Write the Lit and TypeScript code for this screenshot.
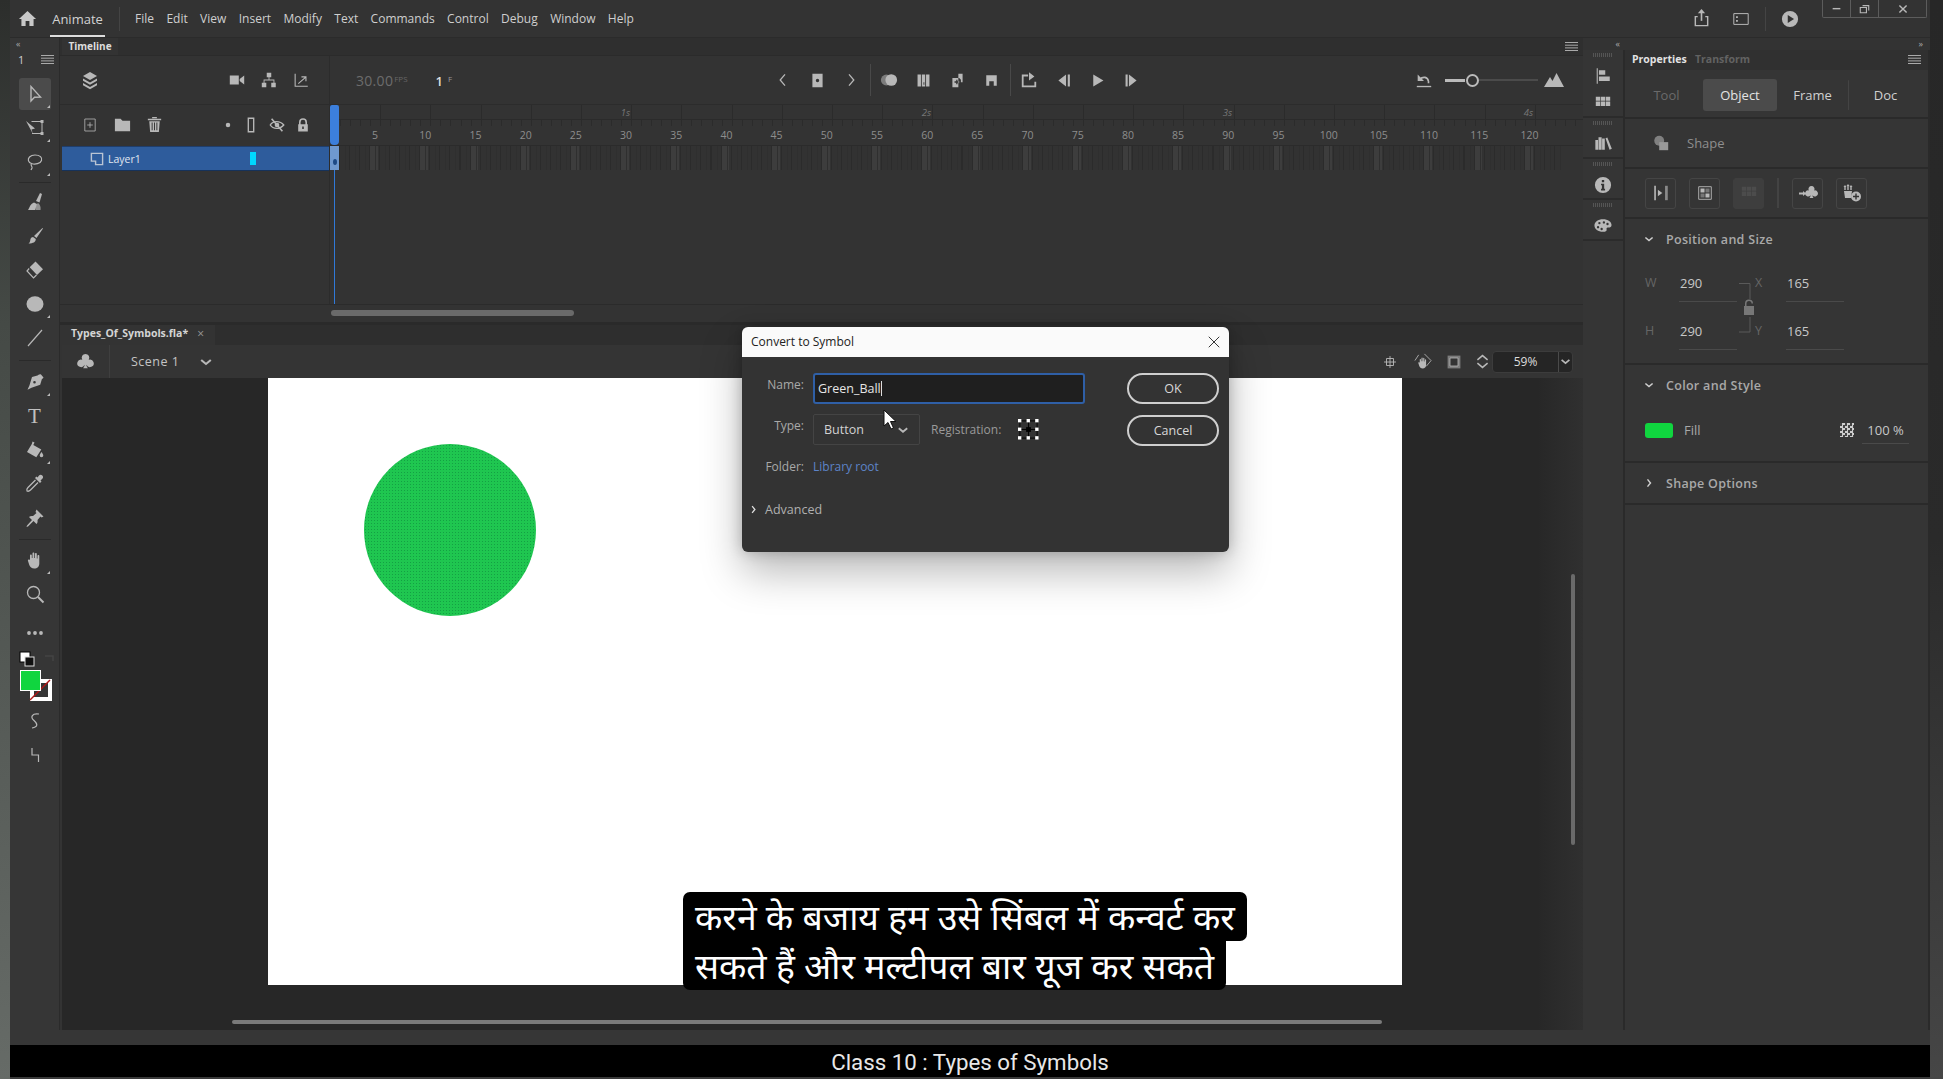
// app.ts
import { LitElement, html, css, svg, TemplateResult } from 'lit';
import { customElement } from 'lit/decorators.js';

const stroke = (d: string, w = 1.4) =>
  svg`<path d=${d} fill="none" stroke="currentColor" stroke-width=${w}></path>`;
const fill = (d: string) => svg`<path d=${d}></path>`;

const P: Record<string, TemplateResult> = {
  home: fill('M10 2 1 10.5h2.6V18H8v-5.5h4V18h4.4v-7.5H19z'),
  layers: svg`${fill('M10 2l7 4-7 4-7-4z')}${fill('M3 8.6l7 4 7-4v2.2l-7 4-7-4z')}${fill('M3 13l7 4 7-4v2.2l-7 4-7-4z')}`,
  camera: fill('M2 5h10v10H2zM13 9l5-4v10l-5-4z'),
  tree: fill('M7.5 2h5v5h-2v2.5H16V13h1.5v5h-5v-5H15v-2.5H5V13h2v5H2v-5h2V9.5h5.5V7h-2z'),
  graph: svg`${stroke('M3.5 3v14h14', 1.2)}${stroke('M7 14l8-7M10.5 6.5H15.5V11.5', 1.2)}`,
  plus: svg`${stroke('M3.5 2.5h13v15h-13z', 1)}${stroke('M10 6.5v7M6.5 10h7', 1)}`,
  folder: fill('M2 4h6l2 2h8v11H2z'),
  trash: svg`${fill('M3 4h14v1.6H3zM7.5 2h5v1.5h-5z')}${fill('M4.5 6.5h11L14.6 18H5.4zM7 8v8h1V8zm2.5 0v8h1V8zM12 8v8h1V8z')}`,
  dot: svg`<circle cx="10" cy="10" r="3.2"></circle>`,
  frame: stroke('M7 2.5h6v15H7z', 1.5),
  eye: svg`${stroke('M2.5 10c3-5 11-5 15 0-4 5-12 5-15 0z', 1.5)}<circle cx="10" cy="10" r="2.6"></circle>${stroke('M4 3l12 14', 1.8)}`,
  lock: fill('M5 9V6.5a5 5 0 0 1 10 0V9h1v9H4V9zm2 0h6V6.5a3 3 0 0 0-6 0zm2 3v3h2v-3z'),
  left: stroke('M12.5 3 6.5 10l6 7', 1.6),
  right: stroke('M7.5 3l6 7-6 7', 1.6),
  key: fill('M4 2h12v16H4zm6 6a2 2 0 1 0 0 4 2 2 0 0 0 0-4z'),
  onion: svg`<circle cx="7" cy="10" r="6" opacity=".55"></circle><circle cx="12.5" cy="10" r="6.5"></circle>`,
  bars: fill('M3 3h4v14H3zM8 3h4v14H8zm2 9v3h1v-3zM13 3h4v14h-4z'),
  copyf: fill('M4 7h7v11H4zM11 2h5v10h-2V9l-2-2h-1zM8.5 9v2h-2v1.5h2v2H10v-2h2V11h-2V9z'),
  insert: fill('M3 3h14v14h-4v-6H7v6H3z'),
  loop: svg`${stroke('M9 5H3v12h14v-5', 2)}${fill('M10 1.5l6 4.5-6 4.5z')}`,
  stepb: fill('M13 3v14L4 10zM15 3h2.5v14H15z'),
  play: fill('M5 3l12 7-12 7z'),
  stepf: fill('M7 3v14l9-7zM3 3h2.5v14H3z'),
  undo: svg`${stroke('M5 9.5c4-4 9-3 10 2v2', 1.8)}${fill('M3 4v7h7z')}${fill('M2 16.5h16V18H2z')}`,
  mount: fill('M0 17 6 7l2.5 4L12.5 3 20 17z'),
  club: fill('M10 2a4 4 0 0 1 3.4 6.1A4 4 0 1 1 11 13.5c0 1.5.5 2.5 1.5 3.5h-5c1-1 1.5-2 1.5-3.5a4 4 0 1 1-2.4-5.4A4 4 0 0 1 10 2z'),
  chev: stroke('M4 7.5l6 5 6-5', 2.6),
  chevr: stroke('M7.5 4l5 6-5 6', 2.4),
  cross: svg`${stroke('M5 5h10v10H5z', 1.3)}${stroke('M10 1.5v17M1.5 10h17', 1.3)}`,
  hand: fill('M5 9.5V5.5c0-1.3 1.8-1.3 1.8 0V8h.7V3.5c0-1.3 1.8-1.3 1.8 0V8h.7V4c0-1.3 1.8-1.3 1.8 0v4.5h.7V6c0-1.3 1.8-1.3 1.8 0v7.5c0 3-2 5-5 5-2.8 0-4-1.5-5-3.5L3 11c-.6-1.2 1-2 1.8-1z'),
  handbox: svg`<g transform="translate(3.5 4) scale(.72)">${fill('M5 9.5V5.5c0-1.3 1.8-1.3 1.8 0V8h.7V3.5c0-1.3 1.8-1.3 1.8 0V8h.7V4c0-1.3 1.8-1.3 1.8 0v4.5h.7V6c0-1.3 1.8-1.3 1.8 0v7.5c0 3-2 5-5 5-2.8 0-4-1.5-5-3.5L3 11c-.6-1.2 1-2 1.8-1z')}</g>${stroke('M12 2l7 7-5 6M2 9l4-6', .9)}`,
  crop: svg`<path d="M2 2h16v16H2z" fill="currentColor" opacity=".55"></path><path d="M5 5h10v10H5z" fill="#333" stroke="currentColor" stroke-width="1"></path>`,
  updown: stroke('M4 8l6-5 6 5M4 12l6 5 6-5', 1.8),
  share: svg`${stroke('M6 8H3.5v9.5h13V8H14', 1.5)}${stroke('M10 12.5V2.5', 1.7)}${fill('M10 0l3.8 4.5H6.2z')}`,
  panel: svg`${stroke('M2 4h16v12H2z', 1.1)}${fill('M4.5 7h2v2h-2zM4.5 11h2v2h-2z')}`,
  circplay: fill('M10 1a9 9 0 1 1 0 18 9 9 0 0 1 0-18zM7.5 5.5v9l7-4.5z'),
  minus: fill('M3 9h14v2.6H3z'),
  restore: svg`${stroke('M7 5.5h9.5v7.5M3.5 8.5h9.5v8h-9.5z', 1.7)}`,
  close: stroke('M4 4l12 12M16 4 4 16', 2.4),
  thinx: stroke('M2.5 2.5l15 15M17.5 2.5l-15 15', 1.3),
  select: svg`<path d="M6 2.5v14.5l3.5-3.7 6-.3z" fill="none" stroke="currentColor" stroke-width="1.4"></path>`,
  free: svg`${fill('M1 3l9 7.5-3.5 1L8 16z')}${stroke('M6.5 3.5H17V15.5H7', 1)}${fill('M15.5 2h3v3h-3zM15.5 14h3v3h-3z')}`,
  lasso: svg`${stroke('M10 3c5 0 7.5 2.5 6.5 5.5-1 3-6.5 4.5-10 3C3 10.5 2.5 7 4.5 5 6 3.5 8 3 10 3z', 1.2)}${stroke('M6.5 11.5c-1.5 2 1 2.5.5 4.5l-1 2', 1.2)}`,
  paint: svg`${fill('M15 1l2 1-2.5 8.5-3.5-1.5z')}<path d="M13 11c2 1.5 3 4 2.5 7h-5c-.8-2.5.2-5.5 2.5-7z" opacity=".7"></path>${fill('M9 10.5l3 1.5-2 6H3c1.5-2 2-6 6-7.5z')}`,
  brush: fill('M17.5 2l.5.5L11.5 12 9 10zM8 11l2.8 2c0 3-2.5 4.5-7.3 4.5 2-1.5 1.5-3 2-4.5.4-1.2 1.5-2 2.5-2z'),
  eraser: svg`${fill('M10.5 1.5 18 9.2 12 15 4.7 7.3z')}${stroke('M4.2 8.5 2 11l6.5 7 3-3', 1.2)}`,
  oval: svg`<ellipse cx="10" cy="10" rx="8.5" ry="7.8"></ellipse>`,
  line: stroke('M3 18 17 2', 1.2),
  pen: fill('M16 2.5l2.5 3c-.3 1-1 1.3-1.5 1.3l-1.8 6-8.7 3-4 2 2-4.5L7 5l5.5-1.5C13 2.8 15 1.5 16 2.5zM9.5 9a1.3 1.3 0 1 0 0 2.6 1.3 1.3 0 0 0 0-2.6z'),
  bucket: fill('M7.5 1.5l2 1L8.3 5l8 4.5-5 7.8L2 12 6.8 4zM16.5 12c1 1.5 1.8 2.5 1.8 3.5a1.8 1.8 0 0 1-3.6 0c0-1 .8-2 1.8-3.5z'),
  drop: svg`${fill('M14 1.5c1-1 2.3-1 3.3 0s1 2.3 0 3.3L15.5 6.5l1 1-1.5 1.5-5-5L11.5 2.5l1 1z')}${stroke('M10.5 6 3 13.5c-1 1-1.5 2.5-1 3.5 1 .5 2.5 0 3.5-1L13 8.5', 1.3)}`,
  pin: fill('M11.5 1.5l7 7-2 1-1-1-3 3.5c.3 1.5 0 3-1 4l-3-3-5.5 5.5-1.5.5.5-1.5L7 12 4 9c1-1 2.5-1.3 4-1l3.5-3-1-1z'),
  zoom: svg`<circle cx="8.5" cy="8.5" r="6" fill="none" stroke="currentColor" stroke-width="1.3"></circle>${stroke('M13 13l5.5 5.5', 2)}`,
  dots: svg`<circle cx="4" cy="10" r="1.9"></circle><circle cx="10" cy="10" r="1.9"></circle><circle cx="16" cy="10" r="1.9"></circle>`,
  smooth: stroke('M14 3C7 2 5 6 9 9.5s4 6.5-2 7.5', 1.2),
  straight: stroke('M7 3v7h6.5v7', 1.2),
  align: fill('M3 1.5h1.2v17H3zM5.5 3.5h7v5h-7zM5.5 10.5h12v5h-12z'),
  grid: fill('M2 3h4.8v4.5H2zM7.5 3h4.8v4.5H7.5zM13 3h5v4.5h-5zM2 8.2h4.8v5H2zM7.5 8.2h4.8v5H7.5zM13 8.2h5v5h-5z'),
  library: fill('M1.5 5.5h3v11h-3zM5 2.5h3.5v14H5zM9 4h3v12.5H9zM12.8 3.5l2-.7 5 12.5-2.5 1z'),
  info: fill('M10 1a9 9 0 1 1 0 18 9 9 0 0 1 0-18zM8.7 4.5v2.5h2.6V4.5zM7.8 8.5v1.7h1v4H7.8V16h4.5v-1.8h-1V8.5z'),
  palette: fill('M10 2.5c5.5 0 9.5 3 9.5 6.5 0 2-1.5 2.8-3.5 2.8-1.5 0-2.5.7-2 2 .5 1.2-.5 2.7-4 2.7C4.5 16.5.5 13.5.5 9.5S4.5 2.5 10 2.5zM6 5.5a1.3 1.3 0 1 0 0 2.6 1.3 1.3 0 0 0 0-2.6zm5-.8a1.3 1.3 0 1 0 0 2.6 1.3 1.3 0 0 0 0-2.6zM15 6.5a1.3 1.3 0 1 0 0 2.6 1.3 1.3 0 0 0 0-2.6zM4.5 10a1.3 1.3 0 1 0 0 2.6 1.3 1.3 0 0 0 0-2.6zM8.5 12a1.3 1.3 0 1 0 0 2.6 1.3 1.3 0 0 0 0-2.6z'),
  shape: svg`<circle cx="8" cy="7.5" r="5.5" opacity=".75"></circle><path d="M8 9h10v9H8z"></path>`,
  distrib: svg`${fill('M2.5 2h1.8v16H2.5z')}${fill('M6.5 6.5l5 3.5-5 3.5z')}<path d="M14.5 2h3v16h-3z" opacity=".65"></path>`,
  grp: svg`<path d="M3 3h14v14H3z" fill="none" stroke="currentColor" stroke-width="1"></path>${fill('M5 5h4.5v4.5H5zM10.5 10.5H15V15h-4.5z')}<path d="M10.5 5H15v4.5h-4.5zM5 10.5h4.5V15H5z" opacity=".5"></path>`,
  toSym: svg`${fill('M1 9.5h4V8l3 2.5L5 13v-1.5H1z')}${fill('M13.5 3a3 3 0 0 1 2.6 4.5 3 3 0 1 1-1.6 4.7c0 1 .3 1.8 1 2.8h-4c.7-1 1-1.8 1-2.8a3 3 0 1 1-1.6-4.7A3 3 0 0 1 13.5 3z')}`,
  symAdd: svg`${fill('M3 2l1.5 2H3.7v3H2.3V4H1.5zM9 2l1.5 2h-.8v3H8.3V4h-.8zM6 1l1.5 2h-.8v4H5.3V3h-.8zM2 8h8l-1 7H3z')}<circle cx="14" cy="13.5" r="5"></circle><path d="M13.3 10.5h1.4v2.3H17v1.4h-2.3v2.3h-1.4v-2.3H11v-1.4h2.3z" fill="#333"></path>`,
  page: svg`<path fill-rule="evenodd" d="M1 1h18v18H7v-5H1zM3 3v9h6v5h8V3z"></path>`,
};

const ic = (name: string, size = 20) =>
  html`<svg class="ic" width=${size} height=${size} viewBox="0 0 20 20">${P[name]}</svg>`;

const hamburger = html`<svg class="burger" width="13" height="9" viewBox="0 0 13 9"><path d="M0 .5h13M0 3.200h13M0 5.900h13M0 8.500h13" stroke="currentColor" fill="none" stroke-width="1"></path></svg>`;

const MENU = ['File', 'Edit', 'View', 'Insert', 'Modify', 'Text', 'Commands', 'Control', 'Debug', 'Window', 'Help'];
const FRAMES = Array.from({ length: 24 }, (_, i) => (i + 1) * 5);
const SECONDS = ['1s', '2s', '3s', '4s'];

@customElement('app-root')
export class AppRoot extends LitElement {
  static styles = css`
    :host {
      display: grid;
      grid-template-columns: 10px 1920px 13px;
      width: 1943px;
      height: 1079px;
      overflow: hidden;
      position: relative;
      font-family: 'Open Sans', 'Noto Sans', sans-serif;
      font-size: 12px;
      color: #cfcfcf;
      background: #333;
    }
    .ic { display: block; fill: currentColor; color: #b8b8b8; flex: none; }
    .burger { display: block; color: #aaa; flex: none; }
    .edge-l { background: linear-gradient(#2c2e2c, #454a46 30%, #666b67); }
    .edge-r { background: linear-gradient(#272727, #2a2a2a 50%, #464646); }
    .app { display: flex; flex-direction: column; height: 1079px; background: #363636; }

    /* menu bar */
    .menubar {
      height: 37px; flex: none; display: flex; align-items: center;
      background: #333; border-bottom: 1px solid #2b2b2b; position: relative;
    }
    .home { width: 18px; margin-left: 8px; }
    .home .ic { color: #c8c8c8; }
    .brand {
      margin-left: 14px; width: 55px; height: 37px; box-sizing: border-box; line-height: 38px;
      border-bottom: 2px solid #ddd; text-align: center; font-size: 13px; color: #d2d2d2;
    }
    .msep { width: 1px; height: 24px; background: #444; margin: 0 15px 0 14px; }
    .menu { display: flex; gap: 12.4px; margin-top: -1px; }
    .topright { margin-left: auto; display: flex; align-items: center; height: 37px; }
    .topright .slot { width: 40px; display: flex; justify-content: center; }
    .tsep { width: 1px; height: 24px; background: #444; margin: 0 4px; }
    .winbtns {
      display: flex; height: 17px; align-self: flex-start; margin: 0 3px 0 12px;
      border: 1px solid #5c5c5c; border-top: 0; border-radius: 0 0 2px 2px;
    }
    .winbtns div { display: flex; align-items: center; justify-content: center; border-left: 1px solid #5c5c5c; }
    .winbtns div:first-child { border-left: 0; width: 27px; }
    .winbtns div:nth-child(2) { width: 27px; }
    .winbtns div:nth-child(3) { width: 47px; }

    .work { flex: none; height: 992px; display: flex; background: #2a2a2a; }

    /* tools */
    .tools { width: 50px; flex: none; background: #363636; display: flex; flex-direction: column; align-items: center; border-right: 1px solid #2b2b2b; box-sizing: border-box; }
    .collapse { height: 12px; align-self: stretch; padding-left: 6px; font-size: 9px; line-height: 12px; color: #aaa; letter-spacing: -1px; }
    .toolhead { align-self: stretch; height: 18px; display: flex; align-items: center; justify-content: space-between; padding: 0 5px 0 8px; font-size: 11px; margin-bottom: 9px; }
    .tool { width: 32px; height: 34px; display: flex; align-items: center; justify-content: center; position: relative; flex: none; }
    .tool.active::before { content: ''; position: absolute; inset: 1px 0; background: #4b4b4b; border-radius: 3px; }
    .tool .ic { position: relative; }
    .tool.corner::after {
      content: ''; position: absolute; right: 1px; bottom: 3px; border-left: 3px solid transparent; border-bottom: 3px solid #bbb;
    }
    .tool-t { font-family: 'Liberation Serif', serif; font-size: 21px; color: #c0c0c0; line-height: 1; }
    .tdiv { height: 1px; width: 32px; background: #2a2a2a; flex: none; }
    .d6 { margin: 3px 0 2px; } .d10 { margin: 5px 0 4px; } .d8 { margin: 4px 0 3px; }
    .gap5 { height: 5px; flex: none; }
    .colors { display: block; flex: none; width: 50px; height: 54px; }

    /* centre */
    .centre { width: 1523px; flex: none; display: flex; flex-direction: column; box-sizing: border-box; }
    .timeline { height: 284px; flex: none; background: #333; display: flex; flex-direction: column; }
    .tabbar { height: 18px; flex: none; display: flex; align-items: stretch; background: #2f2f2f; border-bottom: 1px solid #2b2b2b; padding-left: 2px; box-sizing: border-box; }
    .tab { width: 56px; background: #333; text-align: center; line-height: 17px; font-size: 10px; font-weight: 700; color: #ddd; }
    .tabbar .burger { margin: 4px 5px 0 auto; }
    .ctrl { height: 49px; flex: none; display: flex; align-items: center; border-bottom: 1px solid #2c2c2c; box-sizing: border-box; }
    .ctrl-left { width: 270px; flex: none; display: flex; align-items: center; padding: 0 12px 0 20px; box-sizing: border-box; height: 100%; border-right: 1px solid #2c2c2c; }
    .s32 { width: 32px; display: flex; justify-content: center; }
    .s34 { width: 34px; display: flex; justify-content: center; flex: none; }
    .push { margin-left: auto; }
    .fpsbox { width: 436px; flex: none; padding-left: 26px; box-sizing: border-box; display: flex; align-items: baseline; }
    .fps { font-size: 14px; color: #6c6c6c; letter-spacing: .3px; }
    .sup { font-size: 8px; color: #666; position: relative; top: -4px; margin-left: 1px; }
    .sup.f { color: #999; margin-left: 5px; }
    .frm { font-size: 13px; color: #ddd; font-weight: 600; margin-left: 28px; }
    .transport { display: flex; align-items: center; flex: none; }
    .tvsep { width: 4px; height: 32px; flex: none; position: relative; }
    .tvsep::after { content: ''; position: absolute; left: 1.5px; top: 0; bottom: 0; width: 1px; background: #494949; }
    .zoomctl { margin-left: auto; margin-right: 19px; display: flex; align-items: center; }
    .zminus { width: 20px; height: 3px; background: #bbb; margin: 0 1px 0 12px; }
    .zknob { width: 9px; height: 9px; border: 2px solid #bbb; border-radius: 50%; }
    .zline { width: 59px; height: 2px; background: #4b4b4b; margin-right: 6px; }

    .tlbody { height: 199px; flex: none; display: grid; grid-template-columns: 270px 1fr; }
    .lcol { display: flex; flex-direction: column; border-right: 1px solid #2c2c2c; box-sizing: border-box; padding-left: 2px; }
    .lhead { height: 41px; flex: none; display: flex; align-items: center; padding: 0 13px 2px 12px; box-sizing: border-box; }
    .lhead .s { width: 32px; display: flex; justify-content: center; }
    .lhead .n { width: 26px; display: flex; justify-content: center; }
    .lhead .n.push { margin-right: -3px; }
    .layer {
      height: 25px; flex: none; background: #2e5c9c; border-bottom: 1px solid #16325a; border-top: 1px solid #1f3e6c; box-sizing: border-box;
      display: flex; align-items: center; font-size: 10.5px; color: #e0e6f0; padding-left: 28px;
    }
    .layer .ic { color: #b9c4d4; margin-right: 4px; }
    .layer .mark { width: 6px; height: 13px; background: #00d7ff; margin-left: 109.5px; }
    .rcol { position: relative; min-width: 0; }
    .secs { height: 15px; display: flex; padding-left: 145px; box-sizing: border-box; font-size: 9.5px; font-style: italic; color: #777; line-height: 15px;
      background: repeating-linear-gradient(90deg, #2b2b2b 0 1px, transparent 1px 50.2px); border-bottom: 1px solid #2b2b2b; }
    .secs span { width: 301px; flex: none; text-align: center; }
    .nums { height: 26px; display: flex; padding: 0 0 0 20px; box-sizing: border-box; font-size: 10.5px; line-height: 30px; color: #8d8d8d; border-bottom: 1px solid #2b2b2b;
      background: repeating-linear-gradient(90deg, #2b2b2b 0 1px, transparent 1px 10.04px) 0 0 / 100% 6px no-repeat; }
    .nums span { width: 50.2px; flex: none; text-align: center; }
    .cells {
      height: 24px; margin-right: 22px;
      background:
        repeating-linear-gradient(90deg, transparent 0 5px, #2f2f2f 5px 6px, transparent 6px 9px, #2b2b2b 9px 10.04px),
        repeating-linear-gradient(90deg, transparent 0 40px, #3d3d3d 40px 48px, transparent 48px 50.2px),
        #323232;
    }
    .phead { position: absolute; left: 0; top: 0; width: 9px; height: 40px; background: #3c7fdc; border-radius: 2px 2px 4px 4px; }
    .pcell { position: absolute; left: 0; top: 41px; width: 9px; height: 24px; background: #6f99cf; }
    .pcell::after { content: ''; position: absolute; left: 2.5px; top: 13px; width: 4px; height: 6px; border-radius: 50%; background: #1d4a86; }
    .pline { position: absolute; left: 4px; top: 65px; width: 1px; height: 134px; background: #3079d8; }
    .tlscroll { height: 17px; flex: none; border-top: 1px solid #2b2b2b; box-sizing: border-box; padding: 5px 0 0 271px; }
    .thumb { width: 243px; height: 6px; border-radius: 3px; background: #6a6a6a; }

    .doc { flex: 1; display: flex; flex-direction: column; min-height: 0; border-top: 3px solid #2a2a2a; padding-left: 2px; background: #333; box-sizing: border-box; }
    .doctabs { height: 20px; flex: none; background: #2e2e2e; display: flex; }
    .doctab { width: 153px; background: #333; display: flex; align-items: center; padding: 0 0 4px 9px; box-sizing: border-box; font-size: 10.5px; font-weight: 700; color: #d4d4d4; gap: 9px; }
    .doctab i { font-style: normal; font-weight: 400; font-size: 12px; color: #999; }
    .scene { height: 33px; flex: none; display: flex; align-items: center; background: #343434; }
    .scene .clubwrap { width: 48px; display: flex; justify-content: center; position: relative; height: 100%; align-items: center; border-right: 1px solid #3f3f3f; box-sizing: border-box; }
    .scene .name { margin-left: 21px; font-size: 12.5px; color: #c4c4c4; letter-spacing: .5px; width: 67px; }
    .sright { margin-left: auto; display: flex; align-items: center; margin-right: 10px; }
    .sright .s { width: 32px; display: flex; justify-content: center; }
    .sright .s.tight { margin-right: -4px; }
    .zoombox { display: flex; height: 22px; margin-left: -6px; background: #252525; border: 1px solid #3c3c3c; border-radius: 4px; width: 81px; box-sizing: border-box; }
    .zoombox span { width: 65px; text-align: center; line-height: 20px; font-size: 12px; color: #ddd; border-right: 1px solid #4a4a4a; }
    .zoombox div { flex: 1; display: flex; align-items: center; justify-content: center; }
    .board { flex: 1; position: relative; background: linear-gradient(90deg, #272727 0 97%, #303030); padding-left: 206px; min-height: 0; }
    .stage { width: 1134px; height: 607px; background: #fff; overflow: hidden; }
    .ball {
      width: 172px; height: 172px; margin: 66px 0 0 96px; border-radius: 50%;
      background: #1fc650 radial-gradient(#14a044 .75px, transparent .9px) 0 0 / 3px 3px;
    }
    .hscroll { position: absolute; left: 170px; top: 642px; width: 1150px; height: 4px; border-radius: 2px; background: #7a7a7a; }
    .vscroll { position: absolute; right: 8px; top: 196px; width: 4px; height: 271px; border-radius: 2px; background: #6a6a6a; }

    /* right dock */
    .rdock { flex: 1; display: flex; flex-direction: column; min-width: 0; background: #2a2a2a; }
    .rtop { height: 12px; flex: none; background: #333; display: flex; justify-content: space-between; font-size: 9px; line-height: 12px; color: #aaa; letter-spacing: -1px; padding: 0 8px 0 24px; }
    .rtop .in { margin: 0 0 0 auto; width: 303px; }
    .rcols { flex: 1; display: flex; gap: 2px; min-height: 0; padding-right: 2px; }
    .icons { width: 40px; flex: none; background: #353535; display: flex; flex-direction: column; }
    .igroup { border-bottom: 2px solid #2b2b2b; display: flex; flex-direction: column; align-items: center; padding-top: 3px; }
    .hatch { width: 20px; height: 4px; background: repeating-linear-gradient(90deg, #555 0 1px, transparent 1px 2px); margin-bottom: 5px; }
    .igroup .ii { height: 27px; display: flex; align-items: center; }
    .props { flex: 1; display: flex; flex-direction: column; gap: 2px; min-width: 0; }
    .psec { background: #353535; flex: none; box-sizing: border-box; }
    .ptabs { height: 20px; display: flex; align-items: center; padding: 0 0 2px 7px; box-sizing: border-box; background: #303030; }
    .ptabs b { font-size: 10.5px; color: #e2e2e2; width: 63px; }
    .ptabs span { font-size: 10.5px; font-weight: 700; color: #626262; }
    .ptabs .burger { margin: 0 7px 0 auto; }
    .kinds { height: 47px; display: flex; align-items: center; font-size: 13px; color: #d0d0d0; padding-top: 2px; box-sizing: border-box; position: relative; }
    .kinds span { text-align: center; height: 32px; line-height: 32px; border-radius: 3px; }
    .kinds .a { width: 78px; color: #6a6a6a; padding-left: 5px; box-sizing: border-box; }
    .kinds .b { width: 74px; background: #4b4b4b; color: #e4e4e4; }
    .kinds .c { width: 71px; }
    .kinds .sep { width: 1px; height: 30px; background: #444; }
    .kinds .d { width: 73px; }
    .shape { height: 48px; display: flex; align-items: center; padding-left: 27px; gap: 17px; color: #8e8e8e; font-size: 13px; }
    .shape .ic { color: #999; }
    .btns { height: 48px; display: flex; align-items: center; padding-left: 20px; gap: 13px; }
    .btn { width: 31px; height: 31px; border: 1px solid #454545; border-radius: 3px; box-sizing: border-box; display: flex; align-items: center; justify-content: center; }
    .btn.off { background: #3e3e3e; border-color: #3e3e3e; }
    .btn.off .ic { color: #4c4c4c; }
    .bsep { width: 2px; height: 30px; background: #434343; margin-right: 0; }
    .sech { display: flex; align-items: center; height: 40px; padding-left: 18px; gap: 11px; font-size: 12.5px; font-weight: 600; color: #a9a9a9; letter-spacing: .3px; }
    .sech .ic { color: #d0d0d0; }
    .pos { height: 144px; }
    .fgrid { display: grid; grid-template-columns: 34px 58px 18px 31px 58px; grid-template-rows: 48px 48px; padding-left: 20px; font-size: 13px; color: #c8c8c8; position: relative; margin-top: 9px; }
    .fgrid .l { color: #666; font-size: 12.5px; padding-top: 6px; }
    .fgrid .v { border-bottom: 1px solid #4a4a4a; height: 27px; padding-top: 6px; box-sizing: content-box; padding-left: 1px; }
    .lockbox { position: absolute; left: 114px; top: 15px; width: 16px; height: 50px; }
    .lockbox svg { display: block; }
    .colorsec { height: 96px; }
    .fillrow { display: flex; align-items: center; padding: 16px 0 0 20px; font-size: 13px; color: #a8a8a8; }
    .swatch { width: 28px; height: 15px; border-radius: 3px; background: #10d53f; margin-right: 11px; }
    .checker { margin-left: auto; width: 14px; height: 14px; background: repeating-conic-gradient(#ccc 0 25%, #444 0 50%) 0 0 / 5px 5px; }
    .pct { color: #c8c8c8; width: 47px; margin: 0 19px 0 8px; text-align: center; border-bottom: 1px solid #4a4a4a; padding-bottom: 4px; margin-bottom: -5px; }
    .optsec { height: 40px; }
    .prest { flex: 1; background: #353535; }

    .gapbar { height: 15px; flex: none; background: #363636; }
    .caption-bar { height: 32px; flex: none; background: #000; text-align: center; font: 22.3px/34px Roboto, sans-serif; color: #e8e8e8; }
    .rest { height: 2px; flex: none; background: #3a3a3a; }

    /* convert dialog */
    .dialog {
      position: absolute; left: 742px; top: 327px; width: 487px; height: 225px; border-radius: 6px; overflow: hidden;
      display: flex; flex-direction: column; background: #333;
      box-shadow: 0 20px 42px rgba(0, 0, 0, .28), 0 0 14px rgba(0, 0, 0, .22);
    }
    .dtitle { height: 30px; flex: none; background: #fafafa; color: #222; font-size: 12px; display: flex; align-items: center; justify-content: space-between; padding: 0 8px 1px 9px; box-sizing: border-box; }
    .dtitle .ic { color: #222; }
    .dbody { flex: 1; display: flex; padding: 16px 10px 0 0; }
    .dleft { flex: 1; display: flex; flex-direction: column; min-width: 0; }
    .drow { display: flex; align-items: center; height: 31px; margin-bottom: 10px; }
    .drow.folder { height: 22px; margin-top: 0; }
    .lab { width: 62px; margin-right: 9px; text-align: right; color: #a9a9a9; font-size: 12px; flex: none; }
    .lab.up { margin-top: -9px; }
    .input { width: 272px; height: 31px; box-sizing: border-box; border: 2px solid #2f5fa6; border-radius: 3px; background: #1f1f1f; color: #e6e6e6; font-size: 12.5px; line-height: 27px; padding-left: 3px; }
    .caret { display: inline-block; width: 1px; height: 15px; background: #ddd; vertical-align: -3px; }
    .combo { width: 107px; height: 31px; box-sizing: border-box; border: 1px solid #444; border-radius: 2px; display: flex; align-items: center; justify-content: space-between; padding: 0 9px 0 10px; color: #d2d2d2; font-size: 12.5px; }
    .reg-l { margin: 0 17px 0 11px; color: #9a9a9a; font-size: 12px; }
    .lib { color: #5d84c8; font-size: 12px; }
    .adv { display: flex; align-items: center; color: #b0b0b0; font-size: 12.5px; margin-top: 14px; padding-left: 6px; gap: 6px; }
    .adv .ic { color: #ddd; }
    .dright { width: 92px; display: flex; flex-direction: column; gap: 11px; flex: none; }
    .pill { height: 31px; box-sizing: border-box; border: 2px solid #cfcfcf; border-radius: 16px; text-align: center; line-height: 27px; font-size: 12.5px; color: #d8d8d8; }
    .cursor { position: absolute; left: 882px; top: 409px; }

    /* subtitle */
    .subs {
      position: absolute; left: 683px; top: 892px; display: flex; flex-direction: column; align-items: flex-start;
      font-family: 'Noto Sans Devanagari', 'Noto Sans', 'Lohit Devanagari', 'FreeSans', sans-serif; font-size: 35.6px; color: #fff;
    }
    .subs span { background: #000; height: 49px; line-height: 60px; padding: 0 12px; border-radius: 7px; white-space: nowrap; }
    .subs span:first-child { border-bottom-left-radius: 0; }
    .subs span:last-child { border-top-left-radius: 0; border-top-right-radius: 0; }
  `;

  tool(name: string, opts = '') {
    return html`<div class="tool ${opts}">${ic(name, 20)}</div>`;
  }

  get menubar() {
    return html`<div class="menubar">
      <div class="home">${ic('home', 19)}</div>
      <div class="brand">Animate</div>
      <div class="msep"></div>
      <div class="menu">${MENU.map(m => html`<span>${m}</span>`)}</div>
      <div class="topright">
        <div class="slot">${ic('share', 19)}</div>
        <div class="slot">${ic('panel', 18)}</div>
        <div class="tsep"></div>
        <div class="slot">${ic('circplay', 18)}</div>
        <div class="winbtns">
          <div>${ic('minus', 11)}</div>
          <div>${ic('restore', 13)}</div>
          <div>${ic('close', 12)}</div>
        </div>
      </div>
    </div>`;
  }

  get tools() {
    return html`<div class="tools">
      <div class="collapse">‹‹</div>
      <div class="toolhead"><span>1</span>${hamburger}</div>
      ${this.tool('select', 'active corner')}
      ${this.tool('free', 'corner')}
      ${this.tool('lasso', 'corner')}
      <div class="tdiv d6"></div>
      ${this.tool('paint')}
      ${this.tool('brush')}
      ${this.tool('eraser')}
      ${this.tool('oval', 'corner')}
      ${this.tool('line')}
      <div class="tdiv d10"></div>
      ${this.tool('pen', 'corner')}
      <div class="tool"><span class="tool-t">T</span></div>
      ${this.tool('bucket', 'corner')}
      ${this.tool('drop')}
      ${this.tool('pin')}
      <div class="tdiv d8"></div>
      ${this.tool('hand', 'corner')}
      ${this.tool('zoom')}
      <div class="gap5"></div>
      ${this.tool('dots')}
      <svg class="colors" viewBox="0 0 50 54">
        <rect x="10" y="2" width="10" height="10" fill="#fff" stroke="#000" stroke-width="1"></rect>
        <rect x="15" y="7" width="9" height="9" fill="#111" stroke="#ddd" stroke-width="1"></rect>
        <path d="M35 6h8v5" fill="none" stroke="#444" stroke-width="1.5"></path>
        <rect x="22" y="31" width="18" height="18" fill="none" stroke="#fff" stroke-width="4"></rect>
        <path d="M20 50 40 30" stroke="#b01616" stroke-width="1.5"></path>
        <rect x="10.5" y="20.5" width="20" height="20" fill="#10d53f" stroke="#fff" stroke-width="1"></rect>
      </svg>
      ${this.tool('smooth')}
      ${this.tool('straight')}
    </div>`;
  }

  get timeline() {
    return html`<div class="timeline">
      <div class="tabbar"><div class="tab">Timeline</div>${hamburger}</div>
      <div class="ctrl">
        <div class="ctrl-left">
          ${ic('layers', 20)}
          <div class="s32 push">${ic('camera', 18)}</div>
          <div class="s32">${ic('tree', 18)}</div>
          <div class="s32">${ic('graph', 18)}</div>
        </div>
        <div class="fpsbox">
          <span class="fps">30.00</span><span class="sup">FPS</span>
          <span class="frm">1</span><span class="sup f">F</span>
        </div>
        <div class="transport">
          <div class="s34">${ic('left', 16)}</div>
          <div class="s34">${ic('key', 17)}</div>
          <div class="s34">${ic('right', 16)}</div>
          <div class="tvsep"></div>
          <div class="s34">${ic('onion', 18)}</div>
          <div class="s34">${ic('bars', 17)}</div>
          <div class="s34">${ic('copyf', 17)}</div>
          <div class="s34">${ic('insert', 15)}</div>
          <div class="tvsep"></div>
          <div class="s34">${ic('loop', 18)}</div>
          <div class="s34">${ic('stepb', 17)}</div>
          <div class="s34">${ic('play', 17)}</div>
          <div class="s34">${ic('stepf', 17)}</div>
        </div>
        <div class="zoomctl">
          ${ic('undo', 18)}
          <div class="zminus"></div><div class="zknob"></div><div class="zline"></div>
          ${ic('mount', 20)}
        </div>
      </div>
      <div class="tlbody">
        <div class="lcol">
          <div class="lhead">
            <div class="s">${ic('plus', 16)}</div>
            <div class="s">${ic('folder', 19)}</div>
            <div class="s">${ic('trash', 19)}</div>
            <div class="n push">${ic('dot', 14)}</div>
            <div class="n">${ic('frame', 18)}</div>
            <div class="n">${ic('eye', 18)}</div>
            <div class="n">${ic('lock', 16)}</div>
          </div>
          <div class="layer">
            ${ic('page', 14)}
            <span>Layer1</span><span class="mark"></span>
          </div>
        </div>
        <div class="rcol">
          <div class="secs">${SECONDS.map(s => html`<span>${s}</span>`)}</div>
          <div class="nums">${FRAMES.map(n => html`<span>${n}</span>`)}</div>
          <div class="cells"></div>
          <div class="phead"></div><div class="pcell"></div><div class="pline"></div>
        </div>
      </div>
      <div class="tlscroll"><div class="thumb"></div></div>
    </div>`;
  }

  get docArea() {
    return html`<div class="doc">
      <div class="doctabs"><div class="doctab">Types_Of_Symbols.fla* <i>×</i></div></div>
      <div class="scene">
        <div class="clubwrap">${ic('club', 19)}</div>
        <span class="name">Scene 1</span>
        ${ic('chev', 16)}
        <div class="sright">
          <div class="s">${ic('cross', 14)}</div>
          <div class="s">${ic('handbox', 19)}</div>
          <div class="s tight">${ic('crop', 16)}</div>
          <div class="s">${ic('updown', 17)}</div>
          <div class="zoombox"><span>59%</span><div>${ic('chev', 13)}</div></div>
        </div>
      </div>
      <div class="board">
        <div class="stage"><div class="ball"></div></div>
        <div class="hscroll"></div>
        <div class="vscroll"></div>
      </div>
    </div>`;
  }

  get dock() {
    const group = (names: string[]) => html`<div class="igroup"><div class="hatch"></div>
      ${names.map(n => html`<div class="ii">${ic(n, 18)}</div>`)}</div>`;
    return html`<div class="rdock">
      <div class="rtop"><span class="in">‹‹</span><span>››</span></div>
      <div class="rcols">
        <div class="icons">
          ${group(['align', 'grid'])}
          ${group(['library'])}
          ${group(['info'])}
          ${group(['palette'])}
        </div>
        <div class="props">
          <div class="psec">
            <div class="ptabs"><b>Properties</b><span>Transform</span>${hamburger}</div>
            <div class="kinds">
              <span class="a">Tool</span><span class="b">Object</span><span class="c">Frame</span>
              <span class="sep"></span><span class="d">Doc</span>
            </div>
          </div>
          <div class="psec shape">${ic('shape', 18)}<span>Shape</span></div>
          <div class="psec btns">
            <div class="btn">${ic('distrib', 18)}</div>
            <div class="btn">${ic('grp', 18)}</div>
            <div class="btn off">${ic('grid', 18)}</div>
            <div class="bsep"></div>
            <div class="btn">${ic('toSym', 20)}</div>
            <div class="btn">${ic('symAdd', 20)}</div>
          </div>
          <div class="psec pos">
            <div class="sech">${ic('chev', 12)}<span>Position and Size</span></div>
            <div class="fgrid">
              <span class="l">W</span><span class="v">290</span><span></span><span class="l">X</span><span class="v">165</span>
              <span class="l">H</span><span class="v">290</span><span></span><span class="l">Y</span><span class="v">165</span>
              <div class="lockbox">
                <svg width="16" height="50" viewBox="0 0 16 50">
                  <path d="M0 .5h11V16M11 34v15H0" fill="none" stroke="#5a5a5a" stroke-width="1"></path>
                  <path d="M6 23v-2.5a4 4 0 0 1 8 0h-1.5a2.5 2.5 0 0 0-5 0V23H15v9H5v-9z" fill="#777"></path>
                </svg>
              </div>
            </div>
          </div>
          <div class="psec colorsec">
            <div class="sech">${ic('chev', 12)}<span>Color and Style</span></div>
            <div class="fillrow">
              <div class="swatch"></div><span>Fill</span>
              <div class="checker"></div><span class="pct">100 %</span>
            </div>
          </div>
          <div class="psec optsec">
            <div class="sech">${ic('chevr', 12)}<span>Shape Options</span></div>
          </div>
          <div class="prest"></div>
        </div>
      </div>
    </div>`;
  }

  get dialog() {
    return html`<div class="dialog">
      <div class="dtitle"><span>Convert to Symbol</span>${ic('thinx', 14)}</div>
      <div class="dbody">
        <div class="dleft">
          <div class="drow">
            <span class="lab up">Name:</span>
            <div class="input">Green_Ball<span class="caret"></span></div>
          </div>
          <div class="drow">
            <span class="lab up">Type:</span>
            <div class="combo"><span>Button</span>${ic('chev', 14)}</div>
            <span class="reg-l">Registration:</span>
            <svg width="21" height="21" viewBox="0 0 22 22">
              <path d="M2 2h18v18H2zM2 11h18M11 2v18" fill="none" stroke="#000" stroke-width="1"></path>
              <g fill="#fff">
                <rect x="0" y="0" width="3.5" height="3.5"></rect><rect x="9" y="0" width="3.5" height="3.5"></rect><rect x="18" y="0" width="3.5" height="3.5"></rect>
                <rect x="0" y="9" width="3.5" height="3.5"></rect><rect x="18" y="9" width="3.5" height="3.5"></rect>
                <rect x="0" y="18" width="3.5" height="3.5"></rect><rect x="9" y="18" width="3.5" height="3.5"></rect><rect x="18" y="18" width="3.5" height="3.5"></rect>
              </g>
              <rect x="8.5" y="8.5" width="5" height="5" fill="#000"></rect>
            </svg>
          </div>
          <div class="drow folder"><span class="lab">Folder:</span><span class="lib">Library root</span></div>
          <div class="adv">${ic('chevr', 11)}<span>Advanced</span></div>
        </div>
        <div class="dright"><div class="pill">OK</div><div class="pill">Cancel</div></div>
      </div>
    </div>`;
  }

  render() {
    return html`
      <div class="edge-l"></div>
      <div class="app">
        ${this.menubar}
        <div class="work">
          ${this.tools}
          <div class="centre">${this.timeline}${this.docArea}</div>
          ${this.dock}
        </div>
        <div class="gapbar"></div>
        <div class="caption-bar">Class 10 : Types of Symbols</div>
        <div class="rest"></div>
      </div>
      <div class="edge-r"></div>
      ${this.dialog}
      <svg class="cursor" width="16" height="22" viewBox="0 0 16 22">
        <path d="M2 1v16l4-3.5 3 6.5 2.5-1-3-6.5H14z" fill="#fff" stroke="#111" stroke-width="1"></path>
      </svg>
      <div class="subs">
        <span>करने के बजाय हम उसे सिंबल में कन्वर्ट कर</span>
        <span>सकते हैं और मल्टीपल बार यूज कर सकते</span>
      </div>
    `;
  }
}
